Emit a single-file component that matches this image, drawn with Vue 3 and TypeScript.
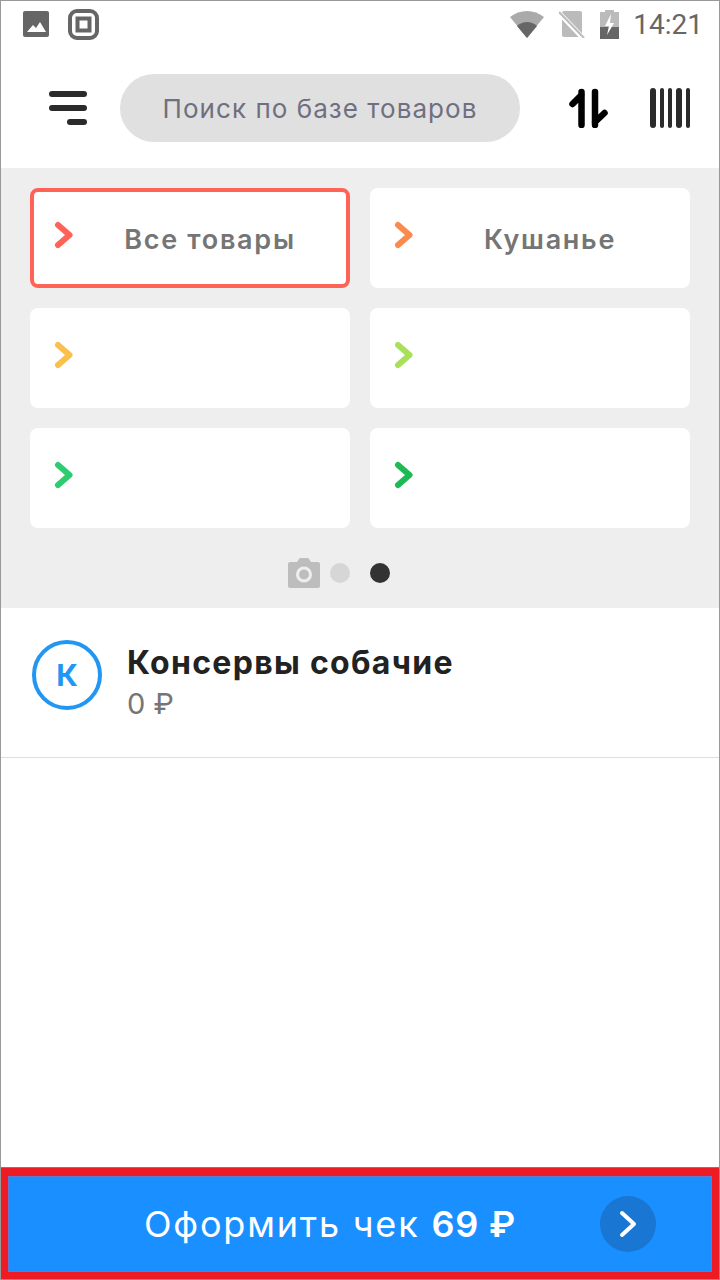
<script setup lang="ts">
const categories = [
  { name: 'Все товары', color: '#ff6358', active: true },
  { name: 'Кушанье', color: '#fb8a4e', active: false },
  { name: '', color: '#fbbf4e', active: false },
  { name: '', color: '#a9e05a', active: false },
  { name: '', color: '#2ecc71', active: false },
  { name: '', color: '#1db954', active: false },
]
</script>

<template>
  <div class="screen">
    <div class="status">
      <svg class="status__pic" width="26" height="26" viewBox="0 0 26 26">
        <rect width="26" height="26" rx="2" fill="#666" />
        <path d="M4 21l6-7 3 3 4-6 6 10z" fill="#fff" />
      </svg>
      <svg class="status__square" width="31" height="31" viewBox="0 0 31 31">
        <rect x="2" y="2" width="27" height="27" rx="7" fill="none" stroke="#666" stroke-width="4" />
        <rect x="9.500" y="9.500" width="12" height="12" fill="none" stroke="#666" stroke-width="4" />
      </svg>
      <span class="status__spacer"></span>
      <svg width="34" height="28" viewBox="0 0 34 28">
        <path d="M0 7C10 -1 24 -1 34 7L17 28z" fill="#aaa" />
        <path d="M7 16C13 10.500 21 10.500 27 16L17 28z" fill="#666" />
      </svg>
      <svg class="status__sim" width="26" height="28" viewBox="0 0 26 28">
        <rect x="3" y="1" width="20" height="26" rx="2" fill="#bbb" />
        <path d="M0 3L25 29" stroke="#fff" stroke-width="5" />
        <path d="M0 2L25 28" stroke="#bbb" stroke-width="2" />
      </svg>
      <svg class="status__bat" width="19" height="29" viewBox="0 0 19 29">
        <path d="M5 2V0h9v2h5v27H0V2z" fill="#bbb" />
        <path d="M0 17h19v12H0z" fill="#666" />
        <path d="M11 4L5 16h4l-2 9 7-12h-4z" fill="#fff" />
      </svg>
      <span class="status__time">14:21</span>
    </div>

    <header class="top">
      <div class="burger">
        <span class="burger__bar"></span>
        <span class="burger__bar"></span>
        <span class="burger__bar burger__bar--short"></span>
      </div>
      <div class="search">Поиск по базе товаров</div>
      <svg class="sort" width="40" height="40" viewBox="0 0 40 40" fill="none" stroke="#000" stroke-width="6.500" stroke-linecap="round">
        <path d="M12.500 4V37M3.500 16L12.500 7" />
        <path d="M26 4V37M35.500 25L26 34" />
      </svg>
      <div class="barcode">
        <span class="barcode__bar barcode__bar--wide"></span>
        <span class="barcode__bar"></span>
        <span class="barcode__bar"></span>
        <span class="barcode__bar barcode__bar--wide"></span>
        <span class="barcode__bar"></span>
      </div>
    </header>

    <section class="cats">
      <div class="cats__grid">
        <div
          v-for="(cat, index) in categories"
          :key="index"
          class="cat"
          :class="{ 'cat--active': cat.active }"
        >
          <svg class="cat__arrow" width="20" height="28" viewBox="0 0 20 28" fill="none" :stroke="cat.color" stroke-width="6" stroke-linecap="round" stroke-linejoin="round">
            <path d="M4 4L15.500 14 4 24" />
          </svg>
          <span class="cat__name">{{ cat.name }}</span>
        </div>
      </div>
      <div class="dots">
        <svg class="dots__camera" width="32" height="30" viewBox="0 0 32 30">
          <path d="M2 4h7l2-3a2 2 0 0 1 1-1h8a2 2 0 0 1 1 1l2 3h7a2 2 0 0 1 2 2v22a2 2 0 0 1-2 2H2a2 2 0 0 1-2-2V6a2 2 0 0 1 2-2z" fill="#bdbdbd" />
          <circle cx="16" cy="16.500" r="6.500" fill="none" stroke="#eee" stroke-width="3" />
        </svg>
        <span class="dot"></span>
        <span class="dot dot--on"></span>
      </div>
    </section>

    <div class="item">
      <div class="item__badge">К</div>
      <div class="item__info">
        <div class="item__name">Консервы собачие</div>
        <div class="item__price">0 ₽</div>
      </div>
    </div>

    <div class="fill"></div>

    <footer class="pay">
      <div class="pay__inner">
        <span class="pay__text">Оформить чек <b class="pay__sum">69 ₽</b></span>
        <span class="pay__go">
          <svg width="20" height="28" viewBox="0 0 20 28" fill="none" stroke="#fff" stroke-width="4" stroke-linecap="round" stroke-linejoin="round">
            <path d="M4 3L16 14 4 25" />
          </svg>
        </span>
      </div>
    </footer>
  </div>
</template>

<style>
html,
body {
  margin: 0;
  background: #fff;
}
</style>

<style scoped>
.screen {
  box-sizing: border-box;
  width: 720px;
  height: 1280px;
  border: 1px solid #999;
  display: flex;
  flex-direction: column;
  background: #fff;
  font-family: Inter, "Noto Sans", sans-serif;
  overflow: hidden;
}

.status {
  box-sizing: border-box;
  height: 47px;
  display: flex;
  align-items: center;
  padding: 0 16px 1px 22px;
}

.status__square {
  margin-left: 19px;
}

.status__spacer {
  flex: 1;
}

.status__sim {
  margin-left: 15px;
}

.status__bat {
  margin-left: 15px;
}

.status__time {
  margin-left: 14px;
  font-family: Roboto, sans-serif;
  font-size: 28px;
  color: #666;
}

.top {
  height: 120px;
  display: flex;
  align-items: center;
}

.burger {
  width: 38px;
  margin-left: 48px;
  display: flex;
  flex-direction: column;
  align-items: flex-end;
  gap: 8px;
}

.burger__bar {
  width: 38px;
  height: 6px;
  border-radius: 3px;
  background: #2b2b2b;
}

.burger__bar--short {
  width: 20px;
}

.search {
  width: 400px;
  height: 68px;
  margin-left: 33px;
  border-radius: 34px;
  background: #e0e0e0;
  display: flex;
  align-items: center;
  justify-content: center;
  font-size: 26px;
  letter-spacing: 1.050px;
  color: #6f6f80;
}

.sort {
  margin-left: 49px;
}

.barcode {
  margin-left: 41px;
  width: 40px;
  height: 40px;
  display: flex;
  justify-content: space-between;
}

.barcode__bar {
  width: 4px;
  border-radius: 2px;
  background: #2b2b2b;
}

.barcode__bar--wide {
  width: 6px;
  border-radius: 3px;
}

.cats {
  height: 440px;
  box-sizing: border-box;
  padding: 20px 29px 0;
  background: #eee;
}

.cats__grid {
  display: grid;
  grid-template-columns: 320px 320px;
  grid-auto-rows: 100px;
  gap: 20px;
}

.cat {
  box-sizing: border-box;
  background: #fff;
  border-radius: 8px;
  display: flex;
  align-items: center;
  padding: 0 4px 0 24px;
}

.cat--active {
  border: 4px solid #ff6358;
  padding: 0 0 0 20px;
}

.cat__arrow {
  flex: none;
  margin-top: -6px;
}

.cat__name {
  flex: 1;
  text-align: center;
  font-size: 27px;
  font-weight: 600;
  letter-spacing: 1.700px;
  color: #757575;
  padding-top: 2px;
}

.dots {
  position: relative;
  margin-top: 35px;
  display: flex;
  justify-content: center;
  gap: 20px;
}

.dots__camera {
  position: absolute;
  left: 258px;
  top: -5px;
}

.dot {
  width: 20px;
  height: 20px;
  border-radius: 50%;
  background: #d6d6d6;
}

.dot--on {
  background: #333;
}

.item {
  height: 150px;
  box-sizing: border-box;
  border-bottom: 1px solid #ddd;
  display: flex;
  align-items: flex-start;
  padding: 32px 0 0 31px;
  gap: 25px;
}

.item__badge {
  box-sizing: border-box;
  width: 70px;
  height: 70px;
  border: 4px solid #2196f3;
  border-radius: 50%;
  display: flex;
  align-items: center;
  justify-content: center;
  font-size: 30px;
  font-weight: 700;
  color: #2196f3;
}

.item__name {
  font-size: 32px;
  font-weight: 700;
  letter-spacing: 1.300px;
  line-height: 44px;
  margin-top: 1px;
  color: #222;
}

.item__price {
  font-size: 29px;
  line-height: 36px;
  margin-top: 1px;
  color: #757575;
}

.fill {
  flex: 1;
}

.pay {
  height: 111px;
  box-sizing: border-box;
  border: 7px solid #ed1c24;
  border-top-width: 8px;
  box-shadow: 0 -1px 0 #8a6ab0;
}

.pay__inner {
  height: 100%;
  display: flex;
  align-items: center;
  justify-content: space-between;
  padding: 0 56px 0 136px;
  background: #1a8fff;
  box-shadow: inset 0 0 0 1px #6a78d0;
}

.pay__text {
  font-size: 36px;
  letter-spacing: 1.800px;
  color: #fff;
}

.pay__sum {
  font-weight: 600;
  letter-spacing: 0.800px;
}

.pay__go {
  width: 56px;
  height: 56px;
  border-radius: 50%;
  background: #1976d2;
  display: flex;
  align-items: center;
  justify-content: center;
}
</style>
